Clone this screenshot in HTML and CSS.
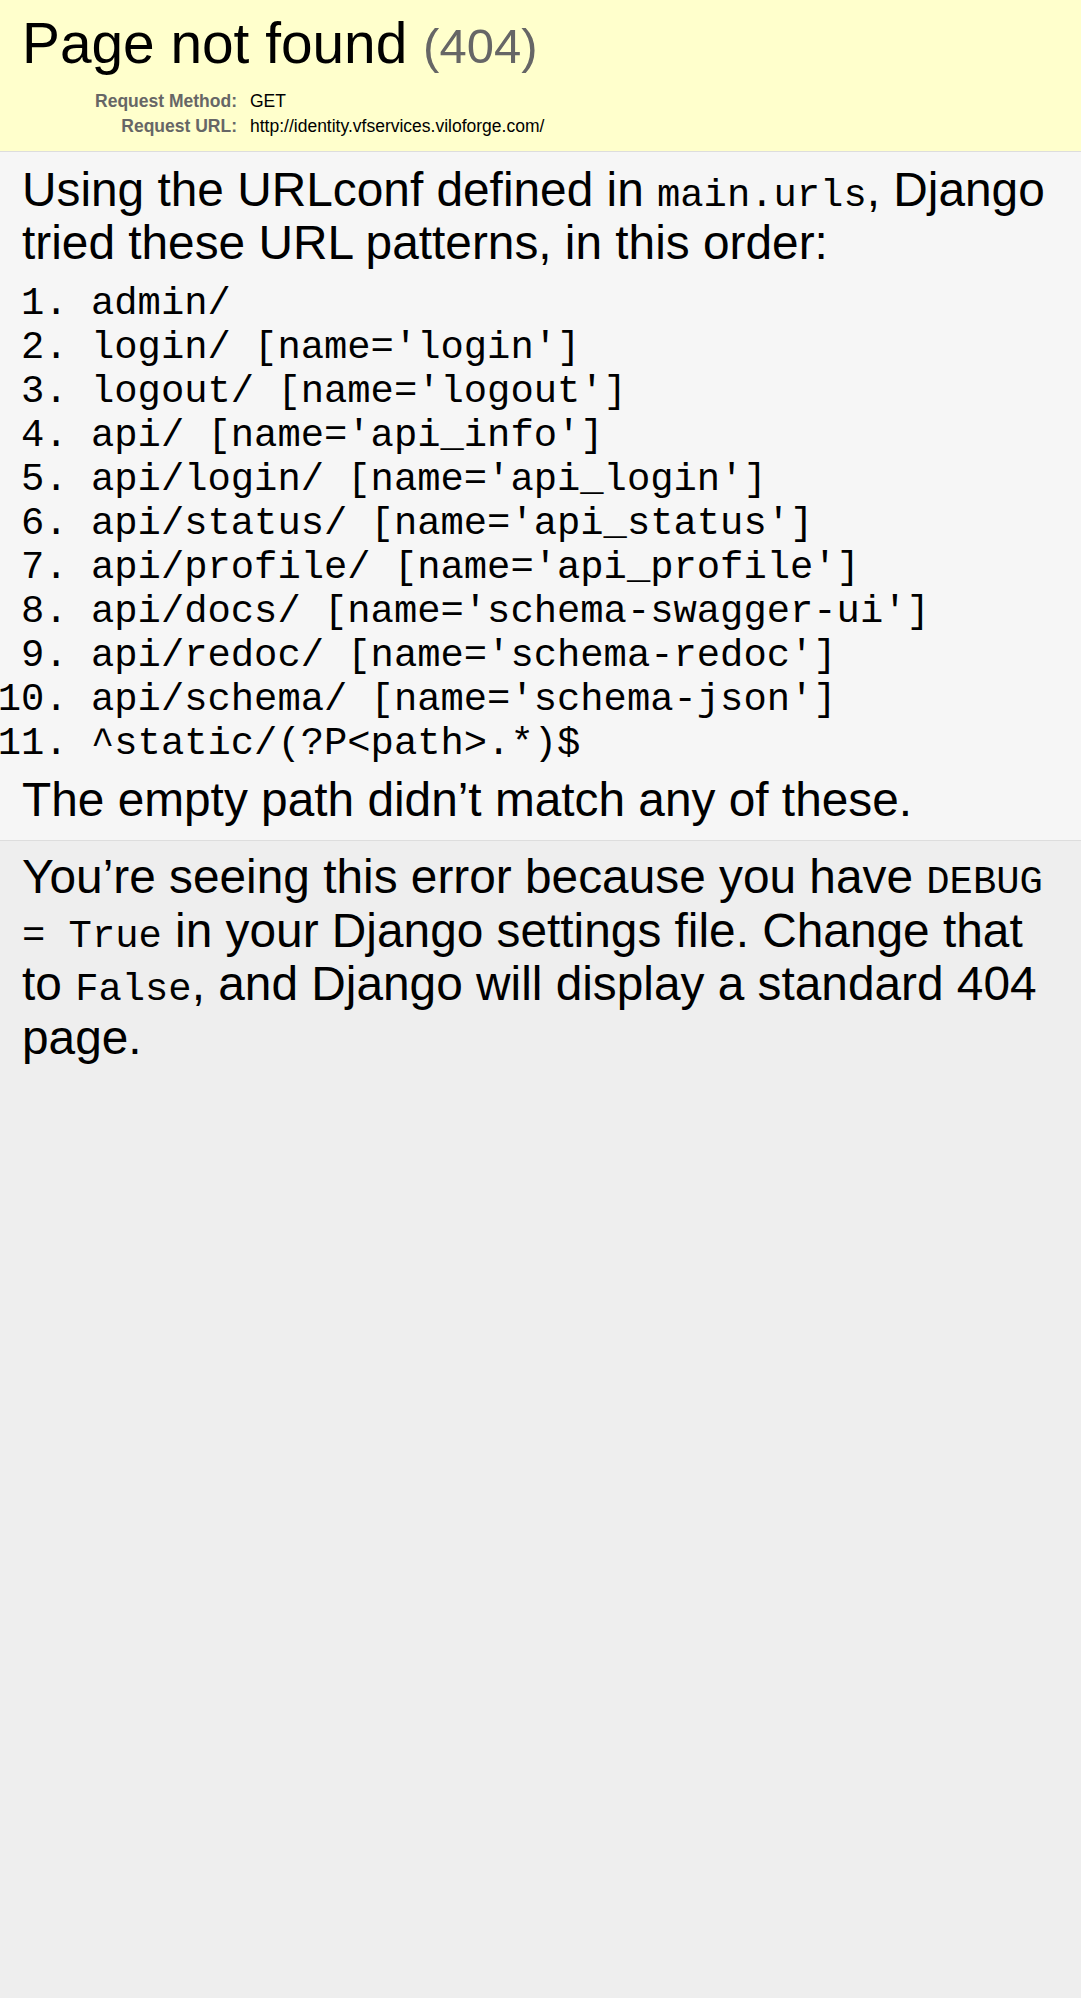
FILE: index.html
```html
<!DOCTYPE html>
<html lang="en">
<head>
<meta charset="utf-8">
<title>Page not found at /</title>
<link rel="stylesheet" href="styles.css">
</head>
<body>
<header class="summary">
  <h1 class="title">Page not found <small class="title-code">(404)</small></h1>
  <table class="meta">
    <tbody>
      <tr><th>Request Method:</th><td>GET</td></tr>
      <tr><th>Request URL:</th><td>http://identity.vfservices.viloforge.com/</td></tr>
    </tbody>
  </table>
</header>
<main class="info">
  <p class="text">Using the URLconf defined in <code class="mono">main.urls</code>, Django tried these URL patterns, in this order:</p>
  <ol class="patterns">
    <li>admin/</li>
    <li>login/ [name='login']</li>
    <li>logout/ [name='logout']</li>
    <li>api/ [name='api_info']</li>
    <li>api/login/ [name='api_login']</li>
    <li>api/status/ [name='api_status']</li>
    <li>api/profile/ [name='api_profile']</li>
    <li>api/docs/ [name='schema-swagger-ui']</li>
    <li>api/redoc/ [name='schema-redoc']</li>
    <li>api/schema/ [name='schema-json']</li>
    <li>^static/(?P&lt;path&gt;.*)$</li>
  </ol>
  <p class="text">The empty path didn’t match any of these.</p>
</main>
<footer class="explanation">
  <p class="text">You’re seeing this error because you have <code class="mono">DEBUG = True</code> in your Django settings file. Change that to <code class="mono">False</code>, and Django will display a standard 404 page.</p>
</footer>
</body>
</html>
```

FILE: styles.css
```css
html, body {
  margin: 0;
  padding: 0;
}

body {
  background: #eee;
  color: #000;
  font-family: "Liberation Sans", Arial, sans-serif;
}

.summary {
  background: #ffc;
  padding: 11px 22px 12px;
  border-bottom: 1px solid #ddd;
}

.title {
  margin: 0 0 12.5px;
  font-size: 56.8px;
  font-weight: normal;
  line-height: normal;
}

.title-code {
  font-size: 49px;
  color: #666;
}

.meta {
  border-collapse: collapse;
  border: none;
  width: 100%;
}

.meta th,
.meta td {
  vertical-align: top;
  font-size: 17.5px;
  line-height: normal;
}

.meta th {
  width: 212px;
  padding: 2px 13px 2px 3px;
  text-align: right;
  color: #666;
  font-weight: bold;
}

.meta td {
  padding: 2px 0;
  text-align: left;
}

.info {
  display: block;
  background: #f6f6f6;
  padding: 11px 22px 13.4px;
  border-bottom: 1px solid #ddd;
}

.text {
  margin: 0;
  font-size: 47.8px;
  line-height: 53.5px;
}

.mono {
  font-family: "Liberation Mono", "Courier New", monospace;
  font-size: 38.83px;
  line-height: 1;
}

.patterns {
  margin: 12.6px 0 7px 69px;
  padding: 0;
}

.patterns li {
  font-family: "Liberation Mono", "Courier New", monospace;
  font-size: 38.83px;
  line-height: 44px;
}

.explanation {
  display: block;
  padding: 9.5px 22px;
}
```
